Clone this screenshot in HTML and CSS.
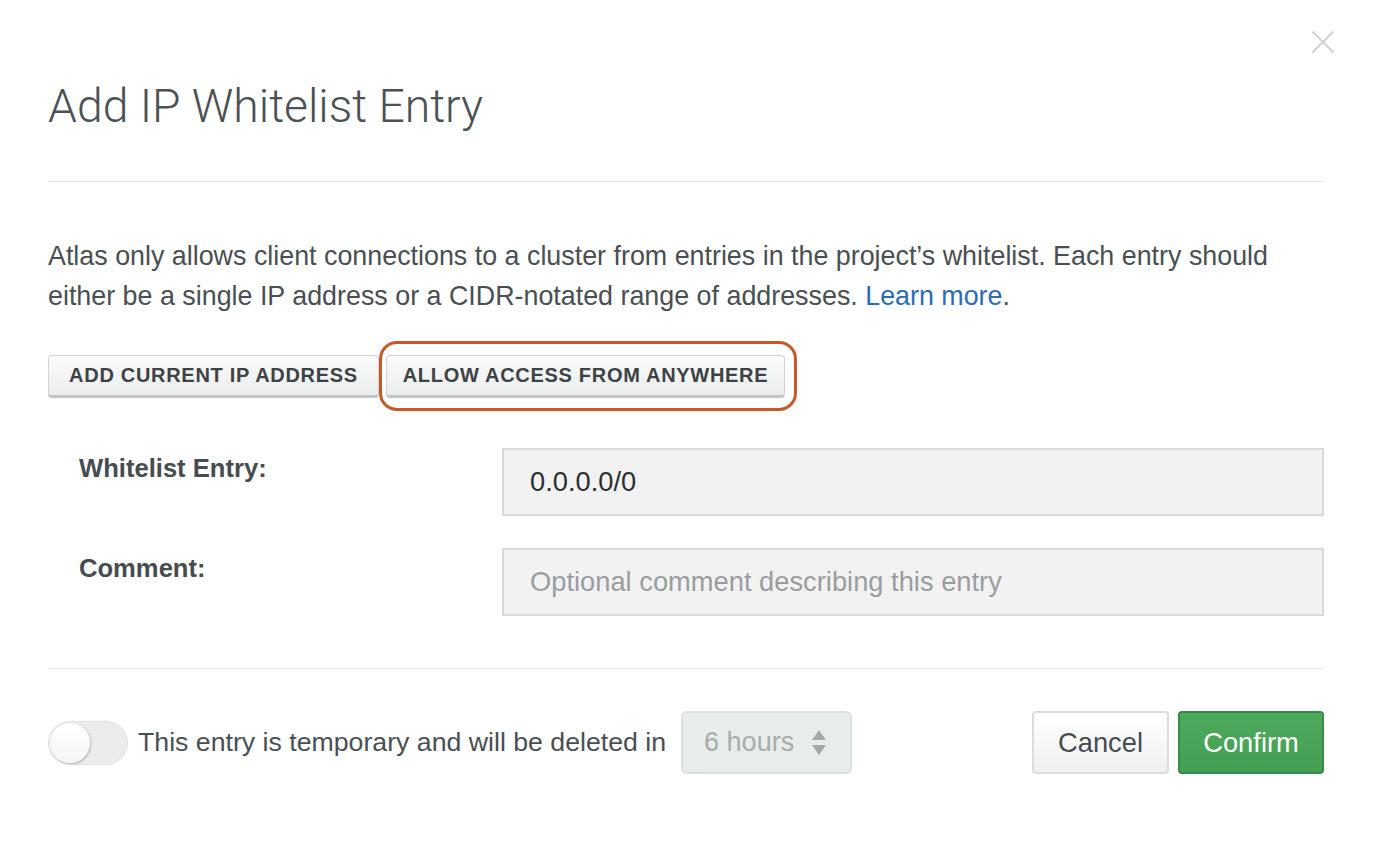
FILE: index.html
```html
<!DOCTYPE html>
<html lang="en">
<head>
<meta charset="utf-8">
<title>Add IP Whitelist Entry</title>
<link rel="stylesheet" href="styles.css">
</head>
<body>
<div class="modal">
  <button class="close" aria-label="Close">
    <svg width="24" height="24" viewBox="0 0 24 24"><path d="M1.5 1.5 L22.5 22.5 M22.5 1.5 L1.5 22.5" stroke="#d2d2d2" stroke-width="2.2" fill="none"/></svg>
  </button>
  <h1 class="title">Add IP Whitelist Entry</h1>
  <hr class="divider">
  <p class="intro">Atlas only allows client connections to a cluster from entries in the project’s whitelist. Each entry should either be a single IP address or a CIDR-notated range of addresses. <a href="#" class="link">Learn more</a>.</p>
  <div class="quick-actions">
    <button class="btn-quick btn-current">Add current IP address</button>
    <span class="highlight"><button class="btn-quick btn-anywhere">Allow access from anywhere</button></span>
  </div>
  <div class="form">
    <div class="form-row">
      <label class="form-label">Whitelist Entry:</label>
      <div class="form-input">0.0.0.0/0</div>
    </div>
    <div class="form-row">
      <label class="form-label">Comment:</label>
      <div class="form-input placeholder">Optional comment describing this entry</div>
    </div>
  </div>
  <hr class="divider footer-divider">
  <div class="footer">
    <span class="toggle"><span class="knob"></span></span>
    <span class="temp-text">This entry is temporary and will be deleted in</span>
    <span class="select">
      <span>6 hours</span>
      <svg class="arrows" width="16" height="28" viewBox="0 0 16 28"><path d="M8 1 L15 11 L1 11 Z M1 16 L15 16 L8 26 Z" fill="#a3aaa6"/></svg>
    </span>
    <span class="spacer"></span>
    <button class="btn btn-cancel">Cancel</button>
    <button class="btn btn-confirm">Confirm</button>
  </div>
</div>
</body>
</html>
```
FILE: styles.css
```css
* { box-sizing: border-box; }
html, body { margin: 0; background: #fff; }
body {
  font-family: "Liberation Sans", Arial, sans-serif;
  color: #494f52;
}
.modal {
  position: relative;
  padding: 84px 52px 0 48px;
}
.close {
  position: absolute;
  top: 30px;
  right: 41px;
  width: 24px;
  height: 24px;
  padding: 0;
  border: 0;
  background: none;
  display: block;
}
.close svg { display: block; }
.title {
  margin: 0;
  font-family: Roboto, "Liberation Sans", Arial, sans-serif;
  font-size: 46.3px;
  line-height: 45px;
  font-weight: 300;
  color: #4b5154;
}
.divider {
  margin: 52px 0 0;
  border: 0;
  border-top: 1px solid #e6e6e6;
  height: 0;
}
.intro {
  margin: 54px 0 0;
  font-size: 26.85px;
  line-height: 40px;
}
.link { color: #2b6cb7; text-decoration: none; }
.quick-actions {
  margin-top: 39px;
  display: flex;
  gap: 7px;
  align-items: flex-start;
}
.btn-quick {
  height: 43px;
  padding: 0;
  font-family: "Liberation Sans", Arial, sans-serif;
  font-weight: bold;
  font-size: 20px;
  letter-spacing: 0.7px;
  text-transform: uppercase;
  color: #3d4245;
  background: linear-gradient(#fbfbfb, #ebedec);
  border: 1px solid #d2d4d3;
  border-bottom: 3px solid #c4c6c5;
  border-radius: 4px;
  display: block;
}
.btn-current { width: 331px; }
.btn-anywhere { width: 399px; }
.highlight {
  position: relative;
  display: block;
}
.highlight::after {
  content: "";
  position: absolute;
  top: -14px;
  left: -7px;
  right: -12px;
  bottom: -13px;
  border: 3px solid #c75a27;
  border-radius: 18px;
  pointer-events: none;
}
.form {
  margin-top: 50px;
  display: flex;
  flex-direction: column;
  gap: 32px;
}
.form-row {
  display: grid;
  grid-template-columns: 454px 1fr;
}
.form-label {
  padding: 5px 0 0 31px;
  font-weight: bold;
  font-size: 25.6px;
  line-height: 30px;
  color: #464c4f;
}
.form-input {
  height: 68px;
  background: #f2f2f2;
  border: 2px solid #dadada;
  padding: 0 26px;
  font-size: 27.3px;
  line-height: 64px;
  color: #2c2f31;
}
.form-input.placeholder { color: #9a9d9f; }
.footer-divider { margin-top: 52px; }
.footer {
  margin-top: 42px;
  display: flex;
  align-items: center;
}
.toggle {
  width: 80px;
  height: 44px;
  border-radius: 22px;
  background: #ececec;
  border: 1px solid #e2e2e2;
  position: relative;
  display: block;
  flex: none;
}
.knob {
  position: absolute;
  top: 1px;
  left: 1px;
  width: 40px;
  height: 40px;
  border-radius: 50%;
  background: linear-gradient(#ffffff, #f5f5f5);
  box-shadow: 1px 1px 2px rgba(0,0,0,0.25);
}
.temp-text {
  margin-left: 10px;
  font-size: 26.7px;
}
.select {
  margin-left: 15px;
  width: 171px;
  height: 63px;
  background: #e8edeb;
  border: 2px solid #dbe2de;
  border-radius: 6px;
  display: flex;
  align-items: center;
  justify-content: space-between;
  padding: 0 23px 0 21px;
  font-size: 27px;
  color: #a7adaa;
}
.arrows { display: block; }
.spacer { flex: 1; }
.btn {
  height: 63px;
  font-family: "Liberation Sans", Arial, sans-serif;
  font-size: 27.3px;
  border-radius: 4px;
  padding: 0;
}
.btn-cancel {
  width: 137px;
  color: #464c4f;
  background: linear-gradient(#ffffff, #f0f0f0);
  border: 2px solid #dcdcdc;
}
.btn-confirm {
  margin-left: 9px;
  width: 146px;
  color: #fff;
  background: linear-gradient(#4daa5c, #439f52);
  border: 2px solid #3a8a49;
}
```
